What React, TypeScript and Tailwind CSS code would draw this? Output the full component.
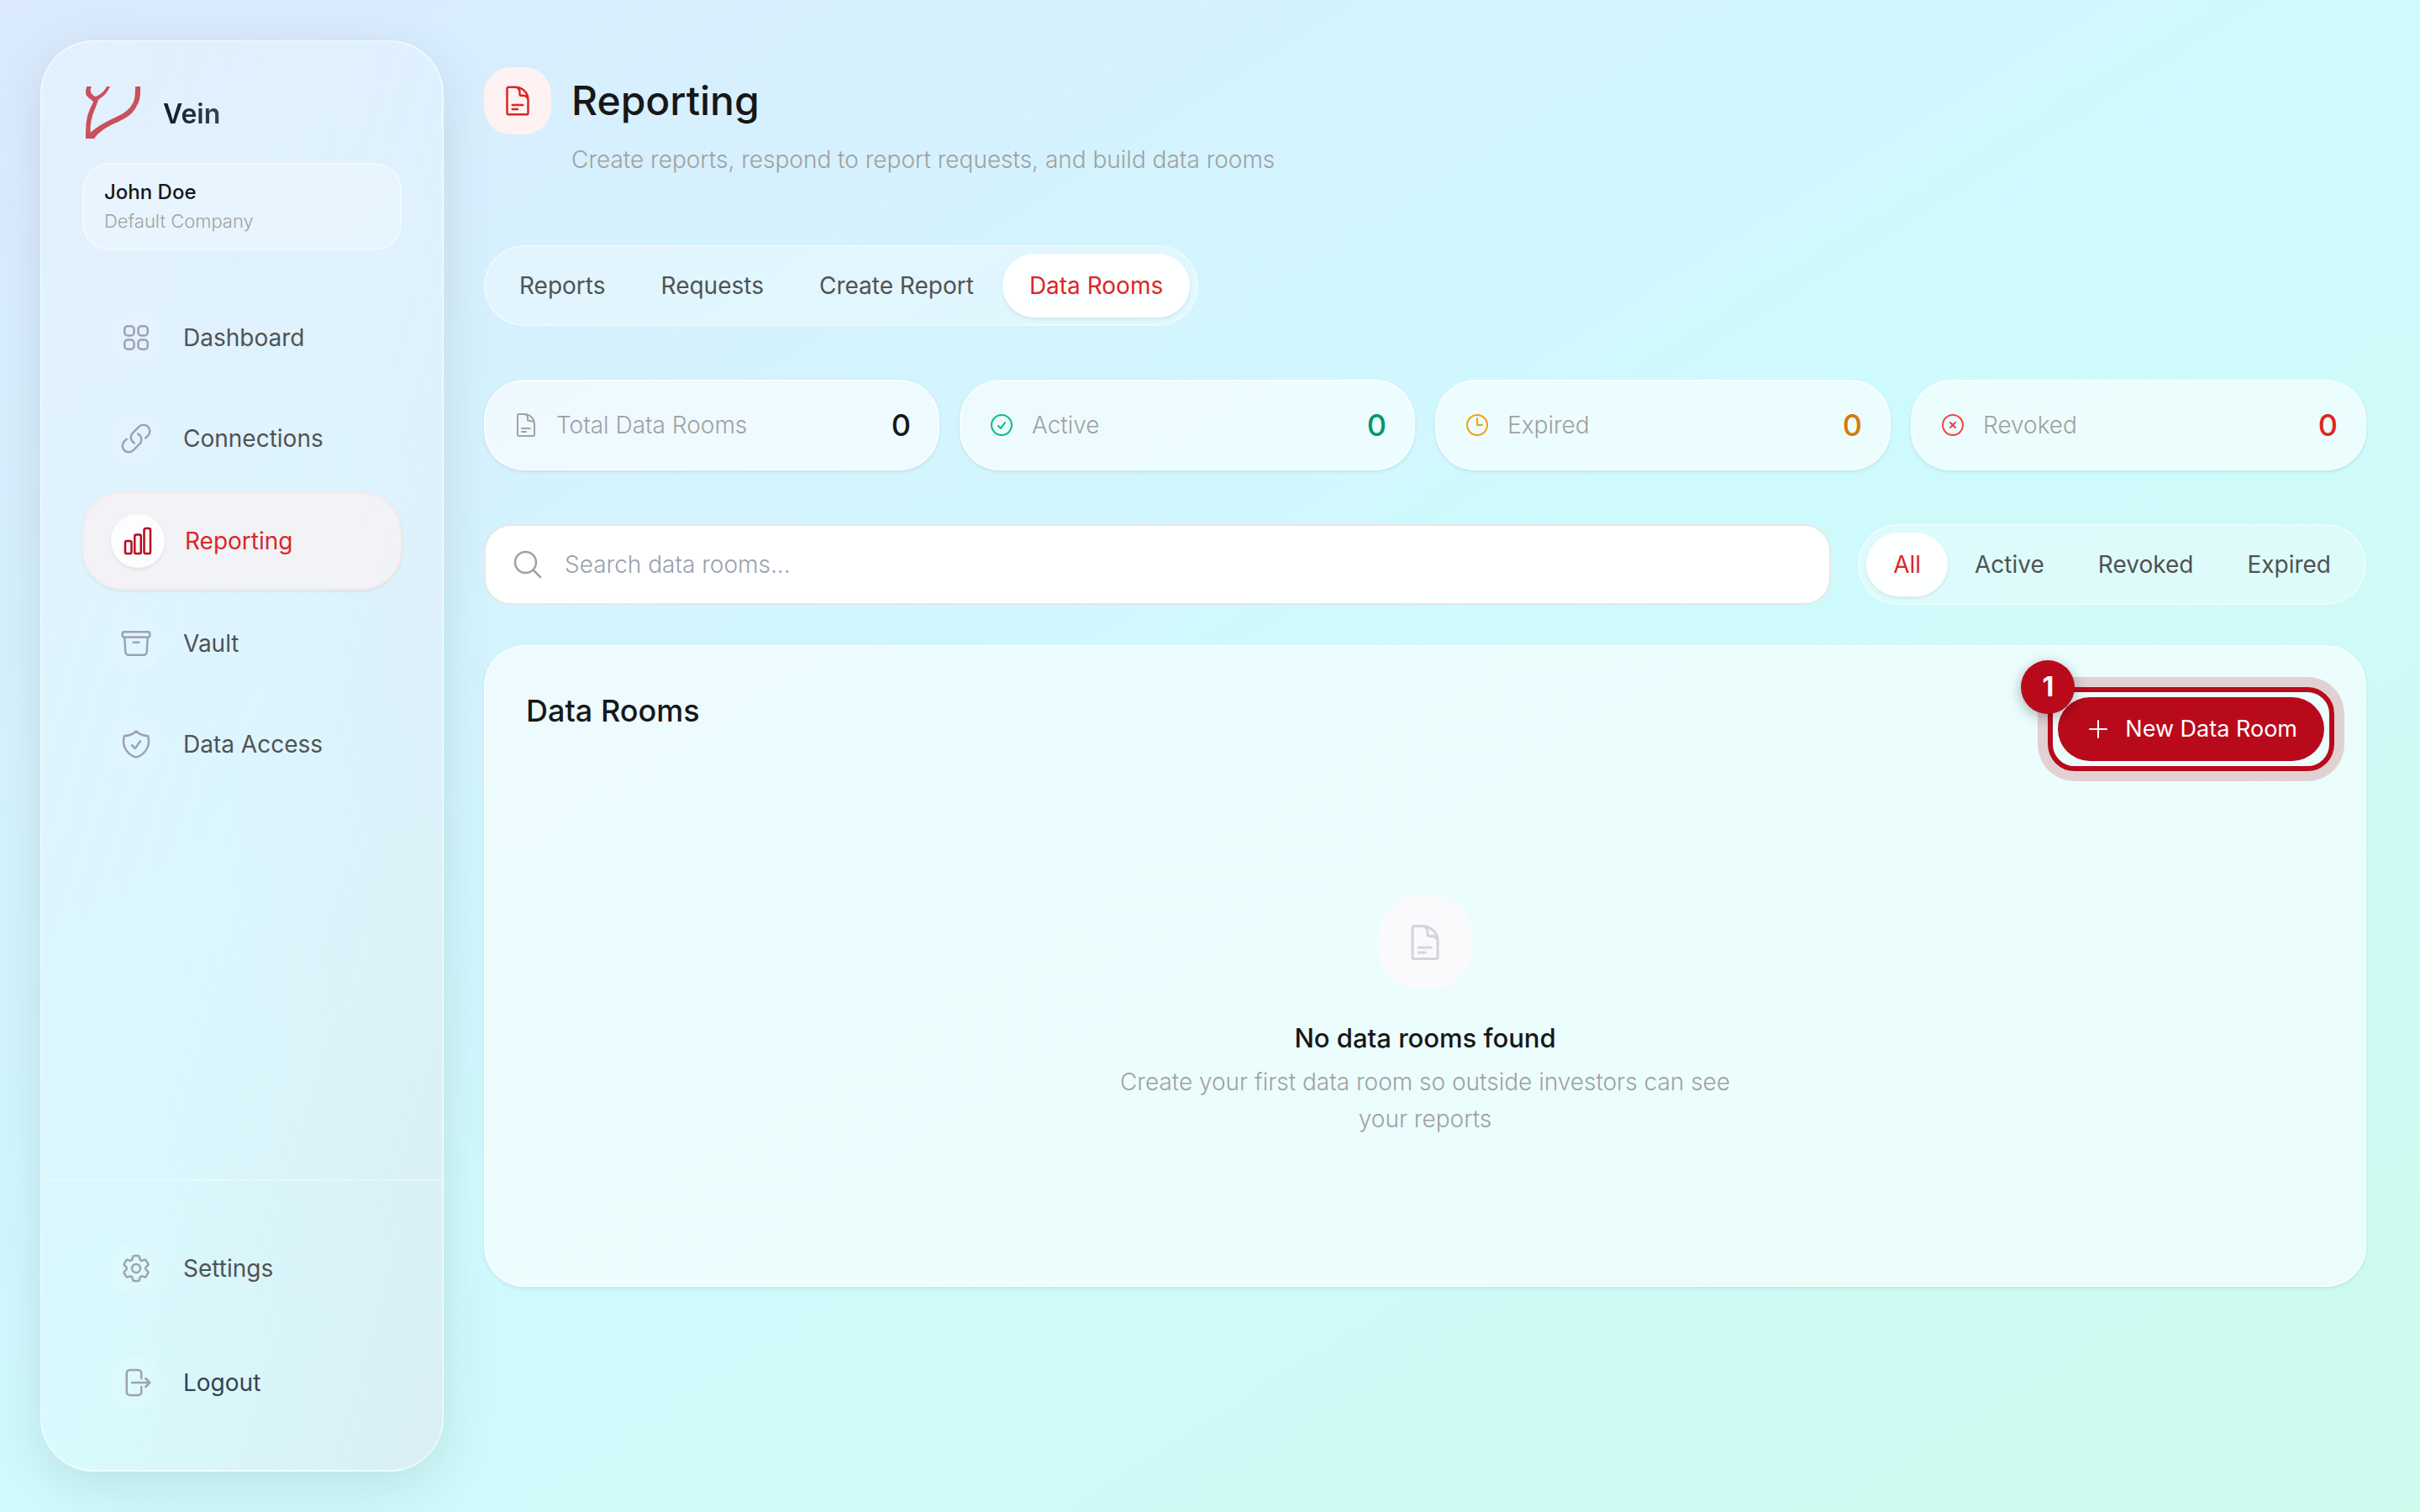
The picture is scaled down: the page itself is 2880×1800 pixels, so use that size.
import type { ComponentType } from 'react'
import {
  HiOutlineArchiveBox,
  HiOutlineArrowRightOnRectangle,
  HiOutlineChartBar,
  HiOutlineCheckCircle,
  HiOutlineClock,
  HiOutlineCog6Tooth,
  HiOutlineDocumentText,
  HiOutlineLink,
  HiOutlineMagnifyingGlass,
  HiOutlinePlus,
  HiOutlineShieldCheck,
  HiOutlineSquares2X2,
  HiOutlineXCircle,
} from 'react-icons/hi2'

type Icon = ComponentType<{ className?: string }>

interface NavEntry {
  label: string
  icon: Icon
  active?: boolean
}

const NAV: NavEntry[] = [
  { label: 'Dashboard', icon: HiOutlineSquares2X2 },
  { label: 'Connections', icon: HiOutlineLink },
  { label: 'Reporting', icon: HiOutlineChartBar, active: true },
  { label: 'Vault', icon: HiOutlineArchiveBox },
  { label: 'Data Access', icon: HiOutlineShieldCheck },
]

const TABS = ['Reports', 'Requests', 'Create Report', 'Data Rooms']
const FILTERS = ['All', 'Active', 'Revoked', 'Expired']

const STATS: { label: string; value: number; icon: Icon; iconColor: string; valueColor: string }[] = [
  { label: 'Total Data Rooms', value: 0, icon: HiOutlineDocumentText, iconColor: 'text-[#a3a3a3]', valueColor: 'text-[#171717]' },
  { label: 'Active', value: 0, icon: HiOutlineCheckCircle, iconColor: 'text-[#10b981]', valueColor: 'text-[#059669]' },
  { label: 'Expired', value: 0, icon: HiOutlineClock, iconColor: 'text-[#f59e0b]', valueColor: 'text-[#d97706]' },
  { label: 'Revoked', value: 0, icon: HiOutlineXCircle, iconColor: 'text-[#ef4444]', valueColor: 'text-[#dc2626]' },
]

export default function App() {
  return (
    <div className="flex min-h-screen gap-12 bg-linear-to-br/srgb from-[#dbeafe] via-[#cffafe] to-[#cdfbee] p-12 pr-16 font-['Inter',sans-serif] text-[28px] leading-[44px] text-neutral-900">
      <Sidebar />
      <main className="min-w-0 flex-1 pt-8">
        <PageHeader />
        <Segmented items={TABS} active="Data Rooms" label="Reporting sections" gap="gap-0.5" />

        <section className="mt-16 grid grid-cols-4 gap-6">
          {STATS.map(s => (
            <div
              key={s.label}
              className="flex h-[108px] items-center gap-5 rounded-[48px] border-2 border-white/50 bg-white/60 px-8 shadow-[0_2px_4px_rgba(0,0,0,0.08)]"
            >
              <s.icon className={`size-8 ${s.iconColor}`} />
              <span className="flex-1 font-light text-neutral-400">{s.label}</span>
              <span className={`text-[36px] font-medium ${s.valueColor}`}>{s.value}</span>
            </div>
          ))}
        </section>

        <div className="mt-16 flex gap-8">
          <label className="flex h-24 flex-1 items-center gap-6 rounded-[32px] border-2 border-gray-200 bg-white px-[30px]">
            <HiOutlineMagnifyingGlass className="size-10 text-neutral-400" />
            <input
              type="text"
              aria-label="Search data rooms"
              placeholder="Search data rooms..."
              className="min-w-0 flex-1 bg-transparent font-light outline-none placeholder:text-gray-400"
            />
          </label>
          <Segmented items={FILTERS} active="All" label="Filter by status" />
        </div>

        <DataRoomsPanel />
      </main>
    </div>
  )
}

// ─── Sidebar ─────────────────────────────────────────────────────────────

function Sidebar() {
  return (
    <aside className="flex w-[480px] shrink-0 flex-col rounded-[64px] border-2 border-white/50 bg-linear-to-br/srgb from-white/25 via-white/20 to-[#f3d6dc]/30 shadow-[0_16px_64px_rgba(0,0,0,0.1)]">
      <div className="px-12 pt-[50px]">
        <div className="flex items-center gap-6">
          <Logo />
          <span className="bg-linear-to-r from-gray-900 to-gray-700 bg-clip-text text-[32px] font-semibold text-transparent">Vein</span>
        </div>
        <div className="mt-[22px] rounded-[32px] border-2 border-white/40 bg-white/25 px-6 py-4 text-[24px] leading-[34px]">
          <p className="font-medium">John Doe</p>
          <p className="text-[22px] font-light text-neutral-400">Default Company</p>
        </div>
      </div>

      <nav className="mt-12 flex flex-col gap-2 px-12">
        {NAV.map(item => <NavLink key={item.label} {...item} />)}
      </nav>

      <div className="mt-auto flex flex-col gap-6 border-t-2 border-white/30 p-12">
        <NavLink label="Settings" icon={HiOutlineCog6Tooth} />
        <button type="button" className="flex h-28 items-center gap-6 px-8 text-left text-gray-700">
          <span className="flex size-16 items-center justify-center rounded-full bg-white/10 text-[#9ca3af]">
            <HiOutlineArrowRightOnRectangle className="size-10" />
          </span>
          Logout
        </button>
      </div>
    </aside>
  )
}

function NavLink({ label, icon: ItemIcon, active }: NavEntry) {
  if (active) {
    return (
      <a
        href="#"
        aria-current="page"
        className="flex h-[116px] items-center gap-6 rounded-[48px] border-2 border-[#fee2e2]/60 bg-[#fef2f2]/65 px-8 text-[#dc2626] shadow-[0_2px_4px_rgba(0,0,0,0.06)]"
      >
        <span className="flex size-16 items-center justify-center rounded-full bg-white/80 text-[#b90a1c] shadow-[0_2px_4px_rgba(0,0,0,0.08)]">
          <ItemIcon className="size-10" />
        </span>
        {label}
      </a>
    )
  }
  return (
    <a href="#" className="flex h-28 items-center gap-6 px-8 text-neutral-600">
      <span className="flex size-16 items-center justify-center rounded-full bg-white/10 text-[#9ca3af]">
        <ItemIcon className="size-10" />
      </span>
      {label}
    </a>
  )
}

function Logo() {
  return (
    <svg viewBox="174 180 216 216" className="size-18 text-[#c9505c]" fill="currentColor" aria-hidden="true">
      <path d="M190 189H207Q201 199 203 206Q208 220 222 225Q250 213 261 189H273Q262 217 231 236Q226 254 217 274Q201 310 203 353Q235 325 290 300Q342 279 357 243Q363 228 363 189H381V215Q380 250 350 285Q330 304 280 325Q240 345 218 371V375H186V351Q186 320 192 295Q200 268 213 244Q210 238 198 231Q178 218 190 189Z" />
    </svg>
  )
}

// ─── Main column ─────────────────────────────────────────────────────────

function PageHeader() {
  return (
    <header className="mb-20 flex gap-6">
      <span className="flex size-20 items-center justify-center rounded-[32px] bg-red-50 text-[#dc2626]">
        <HiOutlineDocumentText className="size-10" />
      </span>
      <div>
        <h1 className="text-[48px] leading-[80px] font-medium">Reporting</h1>
        <p className="mt-2 font-light text-neutral-400">Create reports, respond to report requests, and build data rooms</p>
      </div>
    </header>
  )
}

interface SegmentedProps {
  items: string[]
  active: string
  label: string
  gap?: string
}

function Segmented({ items, active, label, gap = '' }: SegmentedProps) {
  return (
    <div role="group" aria-label={label} className={`flex h-24 w-fit rounded-[48px] border-2 border-white/40 bg-white/30 p-2 ${gap}`}>
      {items.map(item => (
        <button
          key={item}
          type="button"
          aria-pressed={item === active}
          className={
            item === active
              ? 'rounded-[40px] bg-white/95 px-8 text-[#dc2626] shadow-[0_2px_4px_rgba(0,0,0,0.08)]'
              : 'rounded-[40px] px-8 text-neutral-600'
          }
        >
          {item}
        </button>
      ))}
    </div>
  )
}

function DataRoomsPanel() {
  return (
    <section className="mt-12 rounded-[48px] border-2 border-white/50 bg-white/60 p-12 shadow-[0_2px_4px_rgba(0,0,0,0.08)]">
      <div className="flex items-start justify-between">
        <h2 className="text-[36px] leading-[56px] font-medium">Data Rooms</h2>
        <div className="relative mt-3">
          <button type="button" className="flex h-[76px] items-center gap-4 rounded-full bg-[#b90a1c] px-8 text-[27px] text-white">
            <HiOutlinePlus className="size-8" />
            New Data Room
          </button>
          {/* Step highlight around the button */}
          <span className="pointer-events-none absolute -inset-3 rounded-[32px] border-6 border-[#b90a1c] shadow-[0_0_0_12px_rgba(185,10,28,0.18)]" />
          <span className="absolute -top-11 -left-11 flex size-16 items-center justify-center rounded-full bg-[#b90a1c] text-[32px] font-bold text-white shadow-[0_4px_16px_rgba(0,0,0,0.3)]">
            1
          </span>
        </div>
      </div>

      <div className="flex flex-col items-center pt-40 pb-32 text-center">
        <span className="flex size-28 items-center justify-center rounded-[48px] bg-[#fafafc] text-[#d4d4dc]">
          <HiOutlineDocumentText className="size-12" />
        </span>
        <h3 className="mt-9 text-[31px] leading-[44px] font-medium">No data rooms found</h3>
        <p className="mt-2 max-w-[768px] font-light text-neutral-400">
          Create your first data room so outside investors can see your reports
        </p>
      </div>
    </section>
  )
}
